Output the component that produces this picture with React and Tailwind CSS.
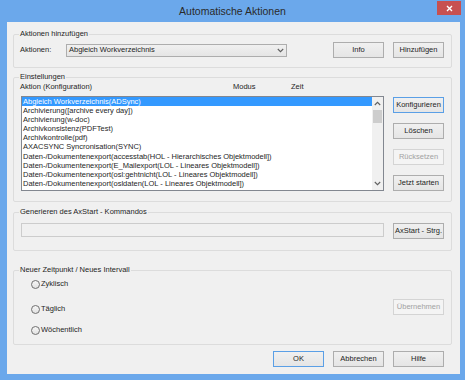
import React from "react";

function Btn({ children, def, disabled, className = "" }) {
  const border = def
    ? "border-[#5a9fe6]"
    : disabled
    ? "border-[#d4d4d4]"
    : "border-[#adadad]";
  const bg = disabled
    ? "bg-[#f4f4f4] text-[#a2a2a2]"
    : "bg-linear-to-b from-[#f0f0f0] to-[#e5e5e5] text-[#1e1e1e]";
  return (
    <div
      className={`flex items-center justify-center h-[16px] w-[51px] shrink-0 border ${border} ${bg} leading-none ${className}`}
    >
      {children}
    </div>
  );
}

function Chevron({ up, className = "" }) {
  return (
    <svg width="7" height="5" viewBox="0 0 7 5" className={className}>
      <polyline
        points={up ? "0.8,4 3.5,1.3 6.2,4" : "0.8,1 3.5,3.7 6.2,1"}
        fill="none"
        stroke="#606060"
        strokeWidth="1.1"
      />
    </svg>
  );
}

function Radio({ label }) {
  return (
    <div className="flex items-center h-[10px] ml-[11px]">
      <div className="w-[9px] h-[9px] rounded-full border border-[#707070] bg-linear-to-b from-[#f6f6f6] to-[#e2e2e2]" />
      <span className="ml-[1px]">{label}</span>
    </div>
  );
}

const items = [
  "Abgleich Workverzeichnis(ADSync)",
  "Archivierung([archive every day])",
  "Archivierung(w-doc)",
  "Archivkonsistenz(PDFTest)",
  "Archivkontrolle(pdf)",
  "AXACSYNC Syncronisation(SYNC)",
  "Daten-/Dokumentenexport(accesstab(HOL - Hierarchisches Objektmodell])",
  "Daten-/Dokumentenexport(E_Mailexport(LOL - Lineares Objektmodell])",
  "Daten-/Dokumentenexport(osl:gehtnicht(LOL - Lineares Objektmodell])",
  "Daten-/Dokumentenexport(osldaten(LOL - Lineares Objektmodell])",
];

export default function App() {
  return (
    <div className="w-[465px] h-[380px] bg-[#6ba8eb] flex flex-col relative overflow-hidden font-['Liberation_Sans',Arial,sans-serif] text-[7.5px] text-[#1e1e1e]">
      {/* title bar */}
      <div className="h-[22px] flex items-center justify-center shrink-0">
        <span className="text-[10.5px] text-[#2a2a2a] mt-[2px]">Automatische Aktionen</span>
      </div>
      <div className="absolute top-[1px] right-[4px] w-[24px] h-[14px] bg-[#c75050] flex items-center justify-center">
        <svg width="7" height="7" viewBox="0 0 7 7">
          <path d="M1 1L6 6M6 1L1 6" stroke="white" strokeWidth="1.4" />
        </svg>
      </div>

      {/* client */}
      <div className="ml-[7px] mr-[5px] mb-[6px] flex-1 bg-[#f0f0f0] pt-[7px] flex flex-col">
        {/* Group 1 */}
        <fieldset className="border border-[#dcdcdc] rounded-[2px] ml-[6px] mr-[8px] pl-[6px] pr-[7px] pb-[9px]">
          <legend className="px-[1px] -ml-[1px] leading-[10px]">Aktionen hinzufügen</legend>
          <div className="mt-[3px] h-[16px] flex items-center">
            <span className="w-[46px]">Aktionen:</span>
            <div className="w-[221px] h-[13px] border border-[#adadad] bg-linear-to-b from-[#f0f0f0] to-[#e5e5e5] flex items-center pl-[2px] pr-[2px]">
              <span className="flex-1">Abgleich Workverzeichnis</span>
              <Chevron />
            </div>
            <div className="ml-auto flex gap-[9px]">
              <Btn>Info</Btn>
              <Btn>Hinzufügen</Btn>
            </div>
          </div>
        </fieldset>

        {/* Group 2 */}
        <fieldset className="mt-[4px] border border-[#dcdcdc] rounded-[2px] ml-[6px] mr-[8px] pl-[6px] pr-[7px] pb-[10px]">
          <legend className="px-[1px] -ml-[1px] leading-[10px]">Einstellungen</legend>
          <div className="h-[10px] flex items-center">
            <span className="w-[213px]">Aktion (Konfiguration)</span>
            <span className="w-[58px]">Modus</span>
            <span>Zeit</span>
          </div>
          <div className="mt-[4px] flex">
            <div className="ml-[1px] w-[363px] h-[95px] border border-[#828790] bg-white flex">
              <div className="flex-1 flex flex-col pt-[0px]">
                {items.map((t, i) => (
                  <div
                    key={i}
                    className={`h-[9.1px] leading-[9.1px] pl-[1px] whitespace-nowrap ${
                      i === 0 ? "bg-[#3399ff] text-white" : ""
                    }`}
                  >
                    {t}
                  </div>
                ))}
              </div>
              <div className="w-[11px] bg-[#f0f0f0] flex flex-col items-center">
                <div className="h-[13px] flex items-center justify-center">
                  <Chevron up />
                </div>
                <div className="w-[9px] h-[13px] bg-[#cdcdcd]" />
                <div className="flex-1" />
                <div className="h-[13px] flex items-center justify-center">
                  <Chevron />
                </div>
              </div>
            </div>
            <div className="ml-auto pt-[1px] flex flex-col gap-[10px]">
              <Btn def>Konfigurieren</Btn>
              <Btn>Löschen</Btn>
              <Btn disabled>Rücksetzen</Btn>
              <Btn>Jetzt starten</Btn>
            </div>
          </div>
        </fieldset>

        {/* Group 3 */}
        <fieldset className="mt-[5px] border border-[#dcdcdc] rounded-[2px] ml-[6px] mr-[8px] pl-[6px] pr-[7px] pb-[11px]">
          <legend className="px-[1px] -ml-[1px] leading-[10px]">Generieren des AxStart - Kommandos</legend>
          <div className="mt-[6px] flex items-start">
            <div className="ml-[1px] w-[363px] h-[14px] border border-[#cccccc] bg-[#f0f0f0]" />
            <Btn className="ml-auto">AxStart - Strg.</Btn>
          </div>
        </fieldset>

        {/* Group 4 */}
        <fieldset className="mt-[14px] border border-[#dcdcdc] rounded-[2px] ml-[6px] mr-[8px] pl-[6px] pr-[7px] pb-[9px]">
          <legend className="px-[1px] -ml-[1px] leading-[10px]">Neuer Zeitpunkt / Neues Intervall</legend>
          <div className="mt-[4px]">
            <Radio label="Zyklisch" />
          </div>
          <div className="mt-[15px] flex items-center h-[10px]">
            <Radio label="Täglich" />
            <Btn disabled className="ml-auto mb-[4px]">Übernehmen</Btn>
          </div>
          <div className="mt-[11px]">
            <Radio label="Wöchentlich" />
          </div>
        </fieldset>

        {/* bottom buttons */}
        <div className="mt-[6px] flex justify-end gap-[9px] pr-[16px]">
          <Btn def>OK</Btn>
          <Btn>Abbrechen</Btn>
          <Btn>Hilfe</Btn>
        </div>
      </div>
    </div>
  );
}
